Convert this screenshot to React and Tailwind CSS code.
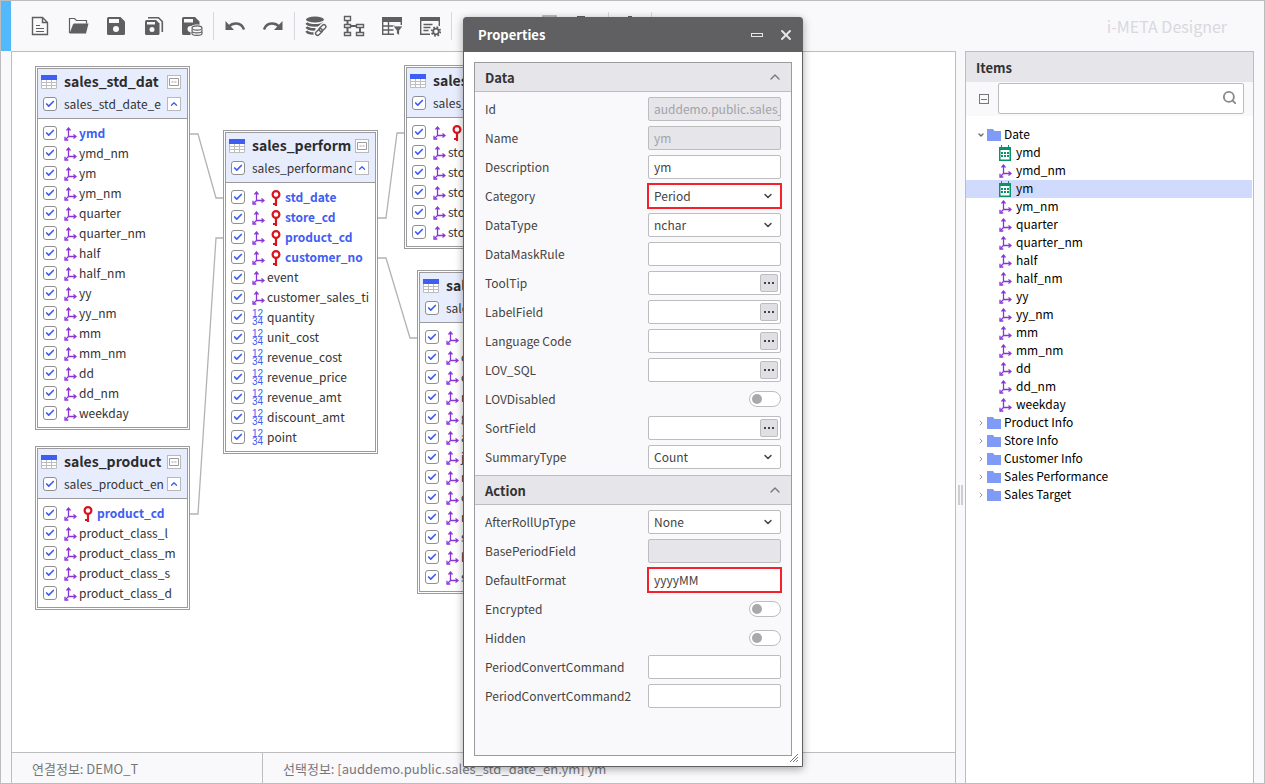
import { useState } from 'react';
import { Check, ChevronDown, ChevronRight, ChevronUp, Search, X } from 'lucide-react';

const dims = (names) => names.map((name) => ({ name, type: 'dim' }));
const nums = (names) => names.map((name) => ({ name, type: 'num' }));

const DATE_FIELDS = [
  'ymd_nm', 'ym', 'ym_nm', 'quarter', 'quarter_nm', 'half', 'half_nm',
  'yy', 'yy_nm', 'mm', 'mm_nm', 'dd', 'dd_nm', 'weekday',
];

const TABLES = [
  {
    id: 'date',
    title: 'sales_std_dat',
    entity: 'sales_std_date_e',
    place: 'left-[23px] top-[14px]',
    fields: [{ name: 'ymd', type: 'dim', linked: true }, ...dims(DATE_FIELDS)],
  },
  {
    id: 'product',
    title: 'sales_product',
    entity: 'sales_product_en',
    place: 'left-[23px] top-[394px]',
    fields: [
      { name: 'product_cd', type: 'dim', linked: true, key: true },
      ...dims(['product_class_l', 'product_class_m', 'product_class_s', 'product_class_d']),
    ],
  },
  {
    id: 'performance',
    title: 'sales_perform',
    entity: 'sales_performanc',
    place: 'left-[211px] top-[78px]',
    fields: [
      { name: 'std_date', type: 'dim', linked: true, key: true },
      { name: 'store_cd', type: 'dim', linked: true, key: true },
      { name: 'product_cd', type: 'dim', linked: true, key: true },
      { name: 'customer_no', type: 'dim', linked: true, key: true },
      ...dims(['event', 'customer_sales_ti']),
      ...nums([
        'quantity', 'unit_cost', 'revenue_cost', 'revenue_price',
        'revenue_amt', 'discount_amt', 'point',
      ]),
    ],
  },
  {
    id: 'store',
    title: 'sales_store',
    entity: 'sales_store_en',
    place: 'left-[392px] top-[13px]',
    fields: [
      { name: 'store_cd', type: 'dim', linked: true, key: true },
      ...dims(['store_nm', 'store_type', 'store_area', 'store_city', 'store_addr']),
    ],
  },
  {
    id: 'customer',
    title: 'sales_custom',
    entity: 'sales_customer_e',
    place: 'left-[405px] top-[218px]',
    fields: [
      { name: 'customer_no', type: 'dim', linked: true, key: true },
      ...dims([
        'customer_nm', 'customer_type', 'region', 'gender', 'age', 'job',
        'marriage', 'city', 'mileage', 'state', 'hobby', 'status',
      ]),
    ],
  },
];

const DATA_ROWS = [
  { label: 'Id', kind: 'text', value: 'auddemo.public.sales_', disabled: true },
  { label: 'Name', kind: 'text', value: 'ym', disabled: true },
  { label: 'Description', kind: 'text', value: 'ym' },
  { label: 'Category', kind: 'select', value: 'Period', marked: true },
  { label: 'DataType', kind: 'select', value: 'nchar' },
  { label: 'DataMaskRule', kind: 'text', value: '' },
  { label: 'ToolTip', kind: 'picker', value: '' },
  { label: 'LabelField', kind: 'picker', value: '' },
  { label: 'Language Code', kind: 'picker', value: '' },
  { label: 'LOV_SQL', kind: 'picker', value: '' },
  { label: 'LOVDisabled', kind: 'switch' },
  { label: 'SortField', kind: 'picker', value: '' },
  { label: 'SummaryType', kind: 'select', value: 'Count' },
];

const ACTION_ROWS = [
  { label: 'AfterRollUpType', kind: 'select', value: 'None' },
  { label: 'BasePeriodField', kind: 'text', value: '', disabled: true },
  { label: 'DefaultFormat', kind: 'text', value: 'yyyyMM', marked: true },
  { label: 'Encrypted', kind: 'switch' },
  { label: 'Hidden', kind: 'switch' },
  { label: 'PeriodConvertCommand', kind: 'text', value: '' },
  { label: 'PeriodConvertCommand2', kind: 'text', value: '' },
];

const TREE = ['Product Info', 'Store Info', 'Customer Info', 'Sales Performance', 'Sales Target'];

/* Toolbar glyphs, all on a 22x22 grid */

const Glyph = ({ children }) => (
  <svg width="22" height="22" viewBox="0 0 22 22" fill="none" stroke="#5f5f61" strokeWidth="1.4">
    {children}
  </svg>
);

const NewIcon = () => (
  <Glyph>
    <path d="M3.500 2.500h10l5 5v12h-15zM13.500 2.500v5h5" />
    <path d="M7 10.500h4M7 13.500h8M7 16.500h8" strokeWidth="1.200" />
  </Glyph>
);

const OpenIcon = () => (
  <Glyph>
    <path d="M2.500 18V3.500h5l2 2h10v3" strokeWidth="1.2" />
    <path d="M7 8.500h14.500L19 18.500H2.500L6 9.500z" fill="#5f5f61" stroke="none" />
  </Glyph>
);

const SaveIcon = () => (
  <Glyph>
    <path d="M3.500 2h12L20 6.500V18.500a1.500 1.500 0 0 1-1.500 1.500h-15A1.500 1.500 0 0 1 2 18.500v-15A1.500 1.500 0 0 1 3.500 2z" fill="#5f5f61" stroke="none" />
    <path d="M4 4h10v4H4z" fill="#f9f9fb" stroke="none" />
    <circle cx="11" cy="14" r="3" fill="#f9f9fb" stroke="none" />
  </Glyph>
);

const SaveAllIcon = () => (
  <Glyph>
    <path d="M5 2.700h10.500L19.300 6.500V17" strokeWidth="1.6" />
    <path d="M3.500 5H13l3.500 3.500V18.500a1.500 1.500 0 0 1-1.500 1.500H3.500A1.500 1.500 0 0 1 2 18.500v-12A1.500 1.500 0 0 1 3.500 5z" fill="#5f5f61" stroke="none" />
    <path d="M4 7h8v2.500H4z" fill="#f9f9fb" stroke="none" />
    <circle cx="9" cy="14.500" r="2.500" fill="#f9f9fb" stroke="none" />
  </Glyph>
);

const SaveDbIcon = () => (
  <Glyph>
    <path d="M2.500 2H14l4.500 4.500V20h-16A1.500 1.500 0 0 1 1 18.500v-15A1.500 1.500 0 0 1 2.500 2z" fill="#5f5f61" stroke="none" />
    <path d="M3 4h9v3.500H3z" fill="#f9f9fb" stroke="none" />
    <circle cx="9.500" cy="14" r="3" fill="#f9f9fb" stroke="none" />
    <path d="M9.500 12.500c0-4 12.500-4 12.500 0V20c0 3-12.500 3-12.500 0z" fill="#f9f9fb" stroke="none" />
    <g fill="#f9f9fb" strokeWidth="1.200">
      <path d="M11 17v1.500c0 2.500 10 2.500 10 0V17" />
      <path d="M11 14.500V16c0 2.500 10 2.500 10 0v-1.500" />
      <ellipse cx="16" cy="13" rx="5" ry="2.200" />
    </g>
  </Glyph>
);

const UndoIcon = () => (
  <Glyph>
    <path d="M5 11.500C8 8 17 6 20 14.500" strokeWidth="2.400" />
    <path d="M1.500 6v9H10z" fill="#5f5f61" stroke="none" />
  </Glyph>
);

const RedoIcon = () => (
  <Glyph>
    <path d="M17 11.500C14 8 5 6 2 14.500" strokeWidth="2.400" />
    <path d="M20.500 6v9H12z" fill="#5f5f61" stroke="none" />
  </Glyph>
);

const DbLinkIcon = () => (
  <Glyph>
    <ellipse cx="10" cy="4.500" rx="9" ry="3" fill="#5f5f61" stroke="none" />
    <path d="M1.500 8c2 3.200 15 3.200 17 0M1.500 12c1.500 2 5 2.500 9 2.300M1.500 16c1 2 4 2.600 7.500 2.500" strokeWidth="2.600" />
    <g stroke="#f9f9fb" strokeWidth="4">
      <rect x="-4" y="-2" width="8" height="4" rx="2" transform="translate(14 17) rotate(-45)" />
      <rect x="-4" y="-2" width="8" height="4" rx="2" transform="translate(17.500 13) rotate(-45)" />
    </g>
    <g strokeWidth="1.300">
      <rect x="-4" y="-2" width="8" height="4" rx="2" transform="translate(14 17) rotate(-45)" />
      <rect x="-4" y="-2" width="8" height="4" rx="2" transform="translate(17.500 13) rotate(-45)" />
    </g>
  </Glyph>
);

const HierarchyIcon = () => (
  <Glyph>
    <path d="M1.500 1.500h6v4h-6zM1.500 9.500h6v3h-6zM1.500 17.500h6v3h-6zM13.500 9.500h7v3h-7zM13.500 17.500h7v3h-7z" />
    <path d="M4.500 5.500v4M4.500 12.500v5M17 12.500v5M7.500 11h6" strokeWidth="2" />
  </Glyph>
);

const TableFilterIcon = () => (
  <Glyph>
    <path d="M1 2h20v5H1z" fill="#5f5f61" stroke="none" />
    <path d="M1.700 6v13.300H13M20.300 6v4M7.500 6v13M1.500 11h12M1.500 15h11" />
    <path d="M12 11h10l-3.500 4.500v5l-3-2v-3z" fill="#5f5f61" stroke="#f9f9fb" strokeWidth="0.800" />
  </Glyph>
);

const FormGearIcon = () => (
  <Glyph>
    <path d="M1 2h20v4H1z" fill="#5f5f61" stroke="none" />
    <path d="M1.700 5v14.300H11M20.300 5v6M4.500 9.500h9M4.500 12.500h7M4.500 15.500h5" />
    <circle cx="17" cy="16.500" r="2.800" strokeWidth="1.800" />
    <circle cx="17" cy="16.500" r="4.300" strokeWidth="1.800" strokeDasharray="1.700 1.677" />
  </Glyph>
);

const AlignIcon = () => (
  <Glyph>
    <path d="M3 5.500h16M3 10.500h16M3 15.500h16" />
  </Glyph>
);

const GridIcon = () => (
  <Glyph>
    <path d="M5 1h13v18H5z" stroke="#a9a9ab" strokeWidth="1.500" />
  </Glyph>
);

const PlugIcon = () => (
  <Glyph>
    <path d="M1 1h8v6H1zM1 8h16v10H1z" fill="#5f5f61" stroke="none" />
  </Glyph>
);

const PinIcon = () => (
  <Glyph>
    <path d="M9 1h4v18H9z" fill="#5f5f61" stroke="none" />
  </Glyph>
);

const TOOL_GROUPS = [
  [['New', NewIcon], ['Open', OpenIcon], ['Save', SaveIcon], ['Save all', SaveAllIcon], ['Save to database', SaveDbIcon]],
  [['Undo', UndoIcon], ['Redo', RedoIcon]],
  [['Link database', DbLinkIcon], ['Auto layout', HierarchyIcon], ['Filter table', TableFilterIcon], ['Form settings', FormGearIcon]],
  [['Align left', AlignIcon], ['Align right', AlignIcon], ['Grid', GridIcon], ['Connect', PlugIcon]],
  [['Pin', PinIcon]],
];

/* Field glyphs */

const DimIcon = () => (
  <svg width="13" height="14" viewBox="0 0 13 14" fill="none" stroke="#8a35d6" strokeWidth="1.3" className="shrink-0">
    <path d="M4.500 2v7.500H11M4.500 9.500L1.500 12.500" />
    <path d="M2.500 3.500l2-2.500 2 2.500M9.500 7.500l2.500 2-2.500 2M1 9.800V13h3.300" />
  </svg>
);

const NumIcon = () => (
  <span className="flex w-[13px] shrink-0 flex-col font-['Liberation_Sans',sans-serif] text-[10px] leading-[8px] text-[#3e5df3]">
    <span>12</span>
    <span>34</span>
  </span>
);

const KeyIcon = () => (
  <svg width="10" height="16" viewBox="0 0 10 16" fill="none" stroke="#d8151f" strokeWidth="2.200" className="shrink-0">
    <circle cx="5" cy="4.500" r="3.400" />
    <path d="M5 8v8M5 14H2" />
  </svg>
);

const TableIcon = () => (
  <svg width="16" height="14" viewBox="0 0 16 14" fill="none" className="shrink-0">
    <path d="M0 5h16v9H0z" fill="#fff" />
    <path d="M.5 5v8.500h15V5M5.500 5v9M10.500 5v9M0 7.500h16M0 10.500h16" stroke="#bdbdbf" />
    <path d="M0 0h16v5H0z" fill="#3e5df3" />
  </svg>
);

const FolderIcon = () => (
  <svg width="14" height="12" viewBox="0 0 14 12" className="shrink-0">
    <path d="M0 0h6l1.500 2H14v10H0z" fill="#7f9bf7" />
  </svg>
);

const CalendarIcon = () => (
  <svg width="12" height="16" viewBox="0 0 12 16" className="shrink-0">
    <path d="M.75 2.750h10.500v12.500H.75z" fill="#fff" stroke="#0b9069" strokeWidth="1.500" />
    <path d="M0 2h12v3H0zM2 0h1v3H2zM9 0h1v3H9z" fill="#0b9069" />
    <path d="M2 7h2v2H2zM5 7h2v2H5zM8 7h2v2H8zM2 10h2v2H2zM5 10h2v2H5zM8 10h2v2H8z" fill="#0b9069" />
  </svg>
);

function Tick({ label }) {
  return (
    <span className="relative flex size-[14px] shrink-0">
      <input
        type="checkbox"
        defaultChecked
        aria-label={label}
        className="peer size-[14px] appearance-none rounded-[3px] border border-[#8f8f92] bg-white"
      />
      <Check
        size={10}
        strokeWidth={4}
        className="pointer-events-none absolute left-[2px] top-[2px] hidden text-[#3e5df3] peer-checked:block"
      />
    </span>
  );
}

function FieldRow({ field }) {
  return (
    <li className="flex h-5 items-center pl-[5px]">
      <Tick label={field.name} />
      <span className="ml-[7px] flex pt-[2px]">
        {field.type === 'num' ? <NumIcon /> : <DimIcon />}
      </span>
      {field.key && (
        <span className="ml-[6px] mr-[2px] flex pt-[2px]">
          <KeyIcon />
        </span>
      )}
      <span className={field.linked ? 'ml-[2px] font-bold text-[#3e5df3]' : 'ml-[2px] text-[#333]'}>
        {field.name}
      </span>
    </li>
  );
}

function EntityTable({ table }) {
  return (
    <section className={`absolute w-[155px] overflow-hidden border-[3px] border-double border-[#9b9b9d] bg-white text-xs leading-5 whitespace-nowrap ${table.place}`}>
      <header className="border-b border-[#9b9b9d] bg-[#e8edfe] pr-[6px] pb-[5px]">
        <div className="flex h-[26px] items-center pl-[3px]">
          <TableIcon />
          <h2 className="ml-[7px] flex-1 overflow-hidden pb-[2px] text-sm font-bold text-[#2c2c2e]">{table.title}</h2>
          <button type="button" aria-label="Collapse" className="grid size-[14px] shrink-0 place-items-center border border-[#b9b9bb] bg-white">
            <svg width="10" height="8" viewBox="0 0 10 8" fill="none" stroke="#9b9b9d">
              <path d="M.5.5h9v7h-9zM2.500 4h2M5.500 4h2" />
            </svg>
          </button>
        </div>
        <div className="flex h-[18px] items-center pl-[5px]">
          <Tick label={table.entity} />
          <span className="ml-[7px] flex-1 overflow-hidden text-[#333]">{table.entity}</span>
          <button type="button" aria-label="Fold fields" className="grid size-[14px] shrink-0 place-items-center border border-[#b9b9bb] bg-white text-[#3e5df3]">
            <ChevronUp size={10} strokeWidth={3} />
          </button>
        </div>
      </header>
      <ul className="py-1">
        {table.fields.map((field) => (
          <FieldRow key={field.name} field={field} />
        ))}
      </ul>
    </section>
  );
}

function Control({ row, id }) {
  const edge = row.marked
    ? 'outline-2 -outline-offset-1 outline-[#f4202a] border-transparent'
    : 'rounded-[2px] border-[#bdbdc0]';

  if (row.kind === 'switch') {
    return (
      <input
        id={id}
        type="checkbox"
        role="switch"
        className="flex h-4 w-8 appearance-none items-center rounded-full border border-[#bdbdc0] bg-white pl-[2px] before:size-[10px] before:rounded-full before:bg-[#a9a9ab] checked:justify-end checked:pr-[2px]"
      />
    );
  }

  if (row.kind === 'select') {
    return (
      <span className="relative flex w-[133px]">
        <select id={id} className={`h-6 w-full appearance-none border bg-white px-[5px] text-[#444] ${edge}`}>
          <option>{row.value}</option>
        </select>
        <ChevronDown size={12} strokeWidth={3} className="pointer-events-none absolute right-[7px] top-[6px] text-[#444]" />
      </span>
    );
  }

  return (
    <span className="relative flex w-[133px]">
      <input
        id={id}
        type="text"
        defaultValue={row.value}
        disabled={row.disabled}
        className={`h-6 w-full border bg-white pl-[5px] text-[#444] disabled:bg-[#e5e5ea] disabled:text-[#a3a3a6] ${edge}`}
      />
      {row.kind === 'picker' && (
        <button
          type="button"
          aria-label={`Choose ${row.label}`}
          className="absolute right-[3px] top-[3px] flex h-[18px] w-[18px] items-center justify-center gap-[2px] rounded-[2px] border border-[#bdbdc0] bg-[#dfdfe4]"
        >
          <i className="size-[2px] bg-[#444]" />
          <i className="size-[2px] bg-[#444]" />
          <i className="size-[2px] bg-[#444]" />
        </button>
      )}
    </span>
  );
}

function PropertyGroup({ title, rows }) {
  const [open, setOpen] = useState(true);

  return (
    <section className="group">
      <button
        type="button"
        onClick={() => setOpen(!open)}
        className="flex h-[29px] w-full items-center justify-between border-b border-[#bdbdc0] bg-[#e5e5ea] pl-[10px] pr-2 text-[13px] font-bold text-[#333] group-last:h-[30px] group-last:border-t"
      >
        <span className="pt-[2px]">{title}</span>
        <ChevronUp size={16} strokeWidth={2} className={open ? 'text-[#77777a]' : 'rotate-180 text-[#77777a]'} />
      </button>
      {open && (
        <div className="pb-1 pt-[2px]">
          {rows.map((row) => (
            <div key={row.label} className="flex h-[29px] items-center justify-between px-[10px]">
              <label htmlFor={`prop-${row.label}`}>{row.label}</label>
              <Control row={row} id={`prop-${row.label}`} />
            </div>
          ))}
        </div>
      )}
    </section>
  );
}

function PropertiesDialog() {
  return (
    <div
      role="dialog"
      aria-label="Properties"
      className="absolute left-[462px] top-[16px] w-[340px] rounded-t-[3px] border border-[#606062] bg-white text-xs text-[#444] shadow-[0_2px_8px_rgba(0,0,0,0.35)]"
    >
      <header className="flex h-[34px] items-center bg-[#606062] pl-[14px] pr-2 text-white">
        <h2 className="flex-1 text-[13px] font-bold">Properties</h2>
        <button type="button" aria-label="Minimize" className="mr-[15px] h-[4px] w-3 border border-[#e5e5e5]" />
        <button type="button" aria-label="Close">
          <X size={16} strokeWidth={3} className="text-[#e5e5e5]" />
        </button>
      </header>
      <div className="px-[10px] pb-[10px] pt-[10px]">
        <div className="border border-[#9b9b9d] bg-[#f9f9fb] pb-[41px]">
          <PropertyGroup title="Data" rows={DATA_ROWS} />
          <PropertyGroup title="Action" rows={ACTION_ROWS} />
        </div>
      </div>
      <svg width="8" height="8" viewBox="0 0 8 8" stroke="#77777a" className="absolute bottom-[4px] right-[4px]">
        <path d="M0 8L8 0M3 8l5-5M6 8l2-2" />
      </svg>
    </div>
  );
}

function TreeLeaf({ name, period, selected }) {
  return (
    <li className={selected ? 'mr-px flex h-[18px] items-center bg-[#d0dafc] pl-[33px]' : 'flex h-[18px] items-center pl-[33px]'}>
      <span className="flex w-[17px]">{period ? <CalendarIcon /> : <DimIcon />}</span>
      <span className="pb-[2px]">{name}</span>
    </li>
  );
}

function ItemsPanel() {
  return (
    <aside className="flex w-[289px] shrink-0 flex-col border-x border-t border-[#bdbdc0] bg-white text-xs text-black">
      <h2 className="flex h-[30px] items-center bg-[#e5e5ea] pl-[10px] pt-px text-[13px] font-bold text-[#333]">Items</h2>
      <div className="flex h-[34px] items-center bg-[#f9f9fb] pl-[13px] pr-[9px]">
        <button type="button" aria-label="Collapse all" className="grid size-[10px] place-items-center border border-[#77777a]">
          <span className="h-px w-[6px] bg-[#77777a]" />
        </button>
        <div className="relative ml-[9px] mb-[1px] flex flex-1">
          <input type="search" aria-label="Search items" className="h-[31px] w-full rounded-[2px] border border-[#bdbdc0] bg-white pl-2 pr-8" />
          <Search size={15} strokeWidth={3} className="pointer-events-none absolute right-[7px] top-[7px] text-[#8a8a8d]" />
        </div>
      </div>
      <ul className="pt-[10px] leading-[18px]">
        <li className="flex h-[18px] items-center pl-[11px]">
          <ChevronDown size={8} strokeWidth={4} className="mr-[2px] text-[#666]" />
          <FolderIcon />
          <span className="ml-[3px] pb-[2px]">Date</span>
        </li>
        <TreeLeaf name="ymd" period />
        {DATE_FIELDS.map((name) => (
          <TreeLeaf key={name} name={name} period={name === 'ym'} selected={name === 'ym'} />
        ))}
        {TREE.map((name) => (
          <li key={name} className="flex h-[18px] items-center pl-[11px]">
            <ChevronRight size={8} strokeWidth={3} className="mr-[2px] text-[#999]" />
            <FolderIcon />
            <span className="ml-[3px] pb-[2px]">{name}</span>
          </li>
        ))}
      </ul>
    </aside>
  );
}

export default function App() {
  return (
    <div className="relative flex min-h-screen flex-col overflow-hidden border border-[#bdbdc0] bg-[#f9f9fb] font-['Noto_Sans_CJK_KR',sans-serif]">
      {/* Toolbar */}
      <header className="flex h-[50px] items-center">
        <div className="w-[10px] self-stretch bg-[#52b9fc]" />
        <nav className="flex items-center pl-[10px]">
          {TOOL_GROUPS.map((group, i) => (
            <div key={i} className="flex items-center">
              {group.map(([label, Icon]) => (
                <button key={label} type="button" aria-label={label} className="grid h-7 w-[38px] place-items-center">
                  <Icon />
                </button>
              ))}
              <span className="mx-[2px] h-7 w-px bg-[#d8d8dc]" />
            </div>
          ))}
        </nav>
        <h1 className="ml-auto pr-[37px] text-base text-[#d8d8dd]">i-META Designer</h1>
      </header>

      {/* Canvas + items */}
      <div className="flex flex-1 pl-[10px] pr-[10px]">
        <main className="flex min-w-0 flex-1 flex-col border-x border-t border-[#bdbdc0]">
          <div className="relative flex-1 bg-white">
            <svg width="480" height="600" fill="none" stroke="#b3b3b5" strokeWidth="1.3" className="absolute left-0 top-0">
              <path d="M176 82h10l18 64h8M176 462h10l18-276h8M364 166h10l11-85h8M364 206h10l24 80h8" />
            </svg>
            {TABLES.map((table) => (
              <EntityTable key={table.id} table={table} />
            ))}
          </div>
          <footer className="flex h-[31px] items-stretch border-t border-[#bdbdc0] text-[13px] text-[#77777a]">
            <p className="flex w-[251px] items-center border-r border-[#bdbdc0] pl-[20px] pt-[2px]">연결정보: DEMO_T</p>
            <p className="flex items-center pl-[20px] pt-[2px]">선택정보: [auddemo.public.sales_std_date_en.ym] ym</p>
          </footer>
        </main>
        <div className="flex w-[9px] items-center justify-center gap-px pt-[156px]">
          <span className="h-5 w-[2px] bg-[#cfcfd2]" />
          <span className="h-5 w-[2px] bg-[#cfcfd2]" />
        </div>
        <ItemsPanel />
      </div>

      <PropertiesDialog />
    </div>
  );
}
